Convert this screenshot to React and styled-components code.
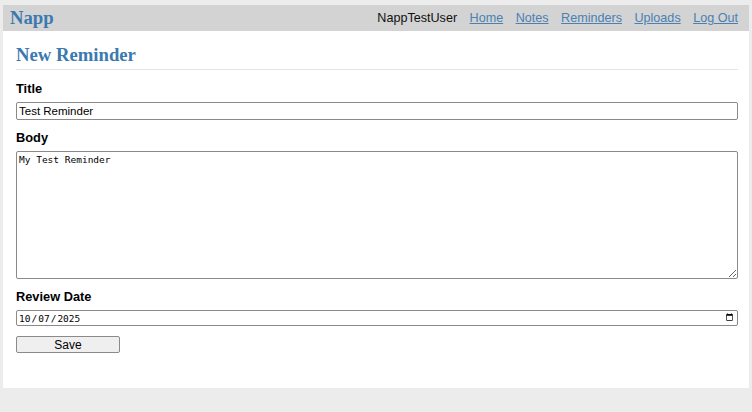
import React from 'react';
import styled, { createGlobalStyle } from 'styled-components';

const GlobalStyle = createGlobalStyle`
    html, body {
        margin: 0;
        background: #ececec;
    }
    body {
        font-family: "Liberation Sans", Arial, sans-serif;
        padding: 5px 3px 24px 3px;
    }
`;

const Page = styled.div`
    background: white;
    width: 746px;
    padding-bottom: 35px;
`;

const Header = styled.header`
    display: flex;
    justify-content: space-between;
    align-items: center;
    height: 26px;
    background: #d3d3d3;
    padding: 0 11px 0 7px;
`;

const Brand = styled.div`
    font-family: "Liberation Serif", "Times New Roman", serif;
    font-weight: bold;
    font-size: 18.7px;
    color: #3b7ab0;
`;

const Nav = styled.nav`
    display: flex;
    gap: 12.5px;
    font-size: 12.6px;
    color: #111;
    a {
        color: #4a80b2;
        text-decoration: underline;
    }
`;

const Content = styled.main`
    padding: 13px 11px 0 13px;
`;

const Heading = styled.h2`
    margin: 0;
    font-family: "Liberation Serif", "Times New Roman", serif;
    font-size: 18.7px;
    line-height: 22px;
    color: #3b7ab0;
    padding-bottom: 3px;
    border-bottom: 1px solid #e4e4e4;
`;

const Form = styled.form`
    display: flex;
    flex-direction: column;
    padding-top: 1px;
`;

const Label = styled.label`
    font-weight: bold;
    font-size: 12.8px;
    line-height: 15px;
    color: #000;
    margin: 10px 0 6px;
`;

const TextInput = styled.input`
    box-sizing: border-box;
    width: 100%;
    height: 18px;
    font-family: "Liberation Sans", Arial, sans-serif;
    font-size: 11.5px;
    padding: 0 2px;
    border: 1px solid #8a8a8a;
    border-radius: 2px;
`;

const TextArea = styled.textarea`
    box-sizing: border-box;
    width: 100%;
    height: 128px;
    font-family: "DejaVu Sans Mono", monospace;
    font-size: 9.5px;
    padding: 2px;
    border: 1px solid #8a8a8a;
    border-radius: 2px;
`;

const DateInput = styled(TextInput)`
    font-family: "DejaVu Sans Mono", monospace;
    font-size: 9.5px;
    height: 16px;
    padding: 0 1px;
`;

const Button = styled.button`
    align-self: flex-start;
    width: 104px;
    height: 17px;
    margin-top: 10px;
    font-family: "Liberation Sans", Arial, sans-serif;
    font-size: 12px;
    background: #efefef;
    border: 1px solid #8a8a8a;
    border-radius: 2px;
    padding: 0;
`;

export default function App() {
    return (
        <>
            <GlobalStyle />
            <Page>
                <Header>
                    <Brand>Napp</Brand>
                    <Nav>
                        <span>NappTestUser</span>
                        <a href="#">Home</a>
                        <a href="#">Notes</a>
                        <a href="#">Reminders</a>
                        <a href="#">Uploads</a>
                        <a href="#">Log Out</a>
                    </Nav>
                </Header>
                <Content>
                    <Heading>New Reminder</Heading>
                    <Form onSubmit={(e) => e.preventDefault()}>
                        <Label>Title</Label>
                        <TextInput type="text" defaultValue="Test Reminder" />
                        <Label>Body</Label>
                        <TextArea defaultValue="My Test Reminder" />
                        <Label>Review Date</Label>
                        <DateInput type="date" defaultValue="2025-10-07" />
                        <Button type="submit">Save</Button>
                    </Form>
                </Content>
            </Page>
        </>
    );
}
